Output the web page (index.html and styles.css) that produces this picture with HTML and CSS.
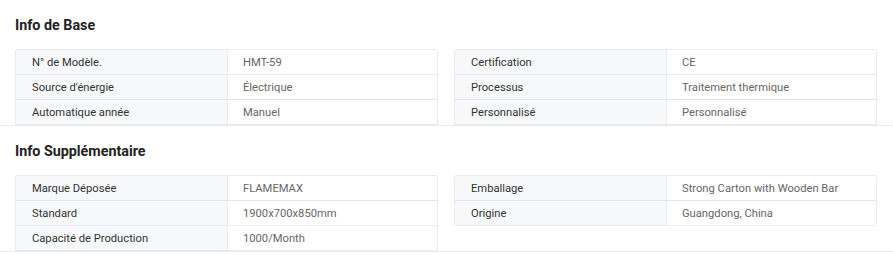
FILE: index.html
```html
<!DOCTYPE html>
<html lang="fr">
<head>
<meta charset="utf-8">
<title>Caractéristiques du produit</title>
<link rel="stylesheet" href="styles.css">
</head>
<body>
  <section class="spec-section">
    <h2 class="spec-title">Info de Base</h2>
    <div class="spec-grid">
      <div class="spec-table">
        <div class="spec-row"><div class="spec-label">N° de Modèle.</div><div class="spec-value">HMT-59</div></div>
        <div class="spec-row spec-row--strong"><div class="spec-label">Source d'énergie</div><div class="spec-value">Électrique</div></div>
        <div class="spec-row"><div class="spec-label">Automatique année</div><div class="spec-value">Manuel</div></div>
      </div>
      <div class="spec-table">
        <div class="spec-row"><div class="spec-label">Certification</div><div class="spec-value">CE</div></div>
        <div class="spec-row spec-row--strong"><div class="spec-label">Processus</div><div class="spec-value">Traitement thermique</div></div>
        <div class="spec-row"><div class="spec-label">Personnalisé</div><div class="spec-value">Personnalisé</div></div>
      </div>
    </div>
  </section>
  <section class="spec-section">
    <h2 class="spec-title">Info Supplémentaire</h2>
    <div class="spec-grid">
      <div class="spec-table">
        <div class="spec-row spec-row--strong"><div class="spec-label">Marque Déposée</div><div class="spec-value">FLAMEMAX</div></div>
        <div class="spec-row"><div class="spec-label">Standard</div><div class="spec-value">1900x700x850mm</div></div>
        <div class="spec-row"><div class="spec-label">Capacité de Production</div><div class="spec-value">1000/Month</div></div>
      </div>
      <div class="spec-table spec-table--closed">
        <div class="spec-row spec-row--strong"><div class="spec-label">Emballage</div><div class="spec-value">Strong Carton with Wooden Bar</div></div>
        <div class="spec-row"><div class="spec-label">Origine</div><div class="spec-value">Guangdong, China</div></div>
      </div>
    </div>
  </section>
</body>
</html>
```

FILE: styles.css
```css
* {
  box-sizing: border-box;
}

html, body {
  margin: 0;
  padding: 0;
  background: #fff;
}

body {
  font-family: Roboto, "Liberation Sans", Arial, sans-serif;
  color: #333;
}

.spec-section {
  padding: 15px 16px 0 15px;
  border-bottom: 1px solid #ebebeb;
}

.spec-title {
  margin: 0 0 14px;
  font-size: 14.3px;
  line-height: 20px;
  font-weight: 700;
  color: #222;
}

.spec-grid {
  display: grid;
  grid-template-columns: 1fr 1fr;
  column-gap: 16px;
  align-items: start;
}

.spec-table {
  border: 1px solid #e8eaed;
  border-bottom: 0;
  border-radius: 3px 3px 0 0;
}

.spec-table--closed {
  border-radius: 3px;
  overflow: hidden;
}

.spec-row {
  display: grid;
  grid-template-columns: 212px 1fr;
  height: 25px;
  border-bottom: 1px solid #e8eaed;
  font-size: 11.2px;
}

/* rows whose divider is drawn a touch heavier */
.spec-row--strong {
  border-bottom-color: #e2e6ec;
  box-shadow: 0 1px 0 #eef0f4;
}

.spec-label,
.spec-value {
  padding-top: 1px;
  line-height: 23px;
  white-space: nowrap;
}

.spec-label {
  padding-left: 16px;
  padding-right: 16px;
  background: #f7f8fa;
  border-right: 1px solid #e8eaed;
  color: #333;
}

.spec-value {
  padding-left: 15px;
  padding-right: 15px;
  background: #fff;
  color: #666;
}
```
